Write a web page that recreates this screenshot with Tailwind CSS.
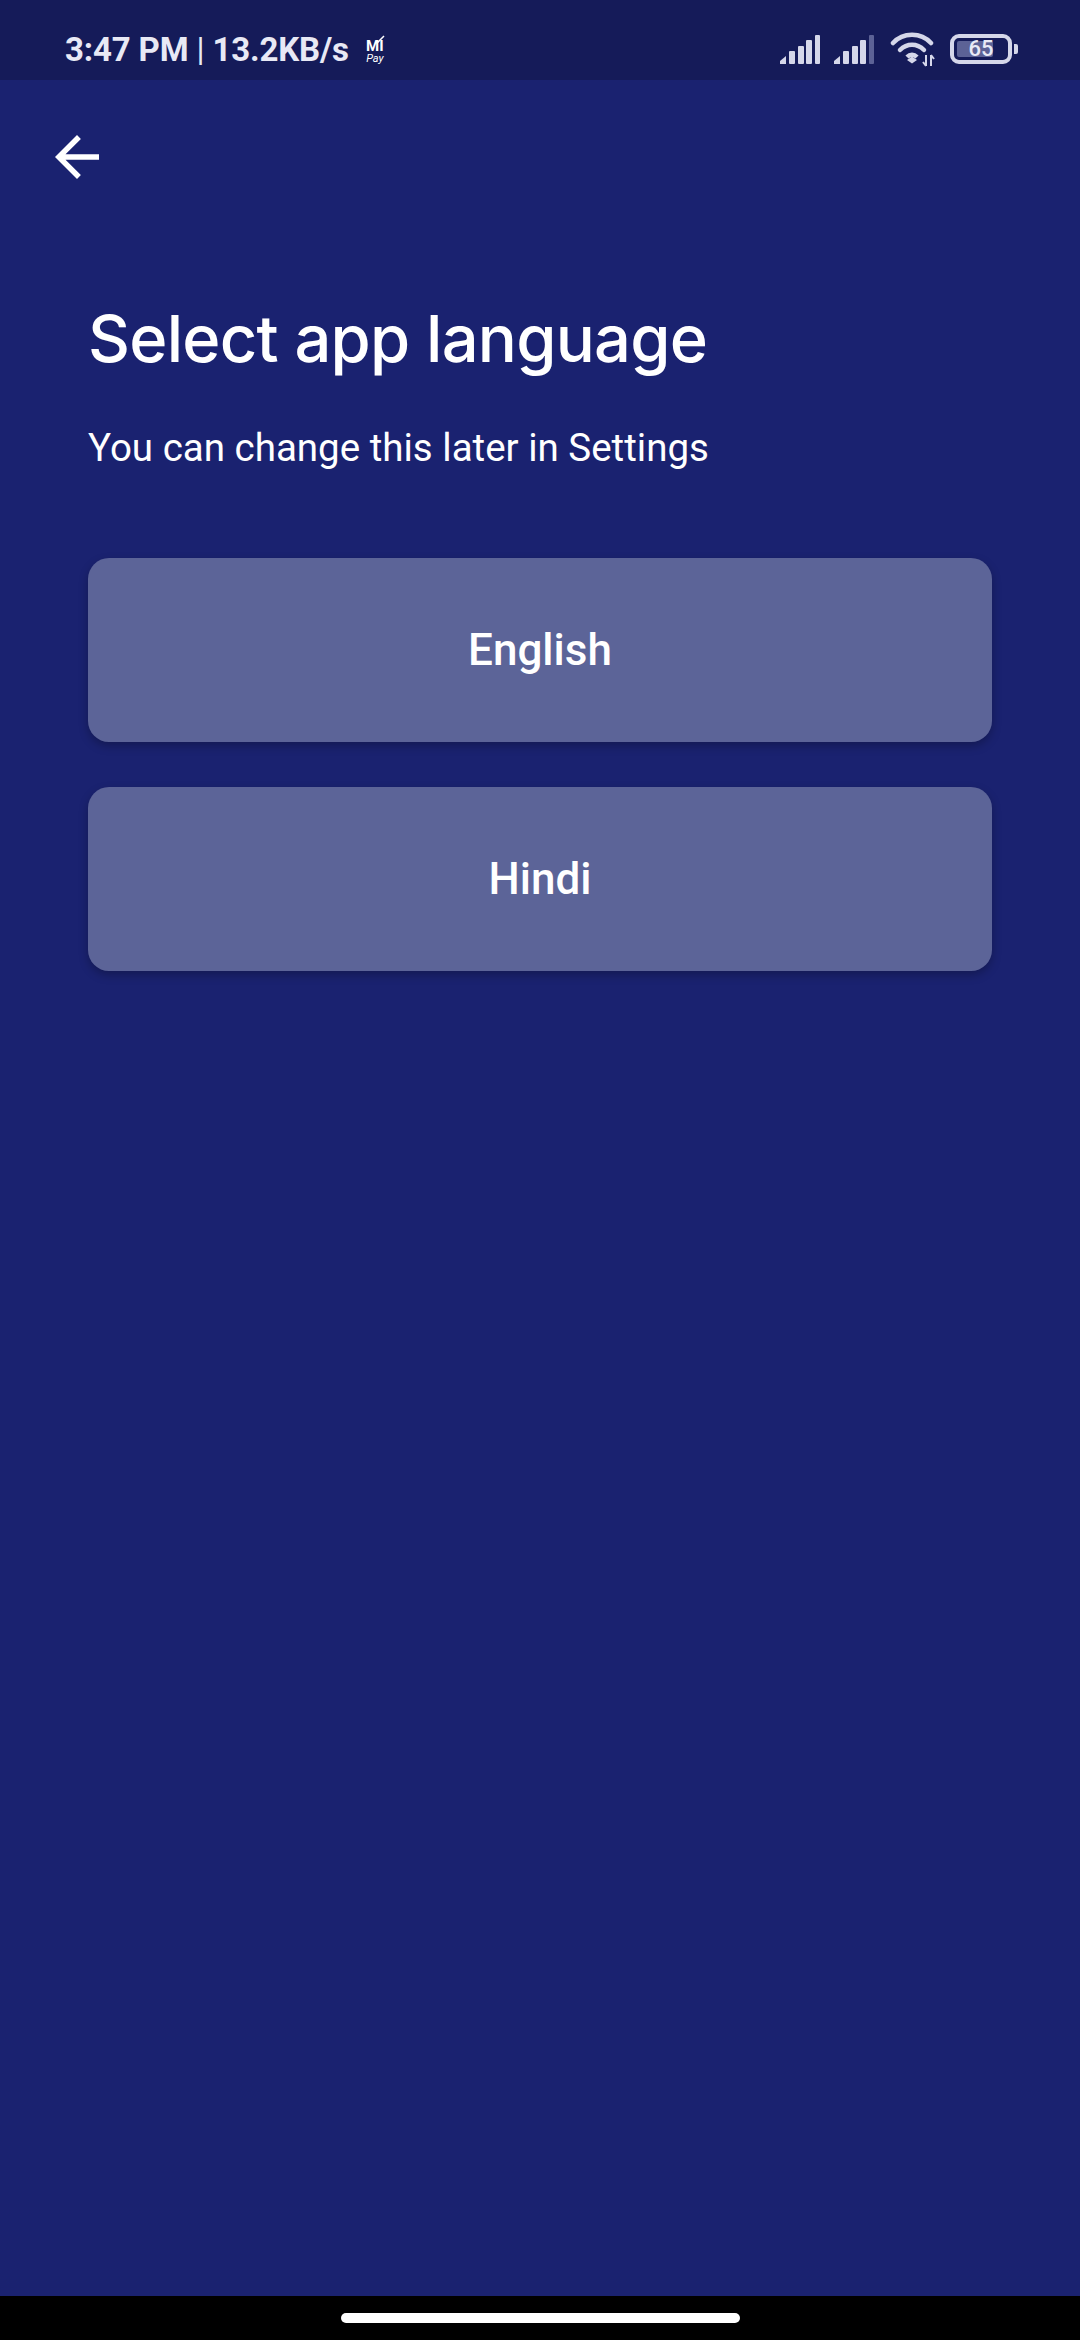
<!DOCTYPE html>
<html lang="en">
<head>
<meta charset="utf-8">
<script src="https://cdn.jsdelivr.net/npm/@tailwindcss/browser@4"></script>
<title>Select app language</title>
</head>
<body class="m-0">
<div class="w-[1080px] h-[2340px] flex flex-col bg-[#1a2270] font-['Roboto',sans-serif] text-white overflow-hidden">
  <!-- status bar -->
  <div class="h-[80px] shrink-0 bg-[#151b59] flex items-center pt-[18px] pl-[65px] pr-[62px] text-[#e8e9f5]">
    <span class="text-[33px] font-bold leading-none whitespace-nowrap tracking-[-0.15px]">3:47 PM <span class="font-normal">|</span> 13.2KB/s</span>
    <div class="ml-[16px] w-[20px] h-[28px] flex flex-col items-center relative">
      <span class="text-[15px] font-bold leading-[15px] mt-[4px] text-white">MI</span>
      <span class="text-[11px] leading-[10px] italic text-white">Pay</span>
      <svg class="absolute top-0 right-0 w-[10px] h-[8px]" viewBox="0 0 10 8"><path d="M1 6l2 1L9 1" stroke="#fff" stroke-width="1.5" fill="none"/></svg>
    </div>
    <div class="ml-auto flex items-center">
      <svg class="w-[40px] h-[29px]" viewBox="0 0 40 29" fill="#d5d7ea">
        <path d="M0 29v-3l6-5v8z"/><rect x="9" y="16" width="6" height="13" rx="1"/><rect x="18" y="11" width="6" height="18" rx="1"/><rect x="26" y="5" width="6" height="24" rx="1"/><rect x="35" y="0" width="5" height="29" rx="1"/>
      </svg>
      <svg class="ml-[14px] w-[40px] h-[29px]" viewBox="0 0 40 29" fill="#d5d7ea">
        <path d="M0 29v-3l6-5v8z"/><rect x="9" y="16" width="6" height="13" rx="1"/><rect x="18" y="11" width="6" height="18" rx="1"/><rect x="26" y="5" width="6" height="24" rx="1"/><rect x="35" y="0" width="5" height="29" rx="1" fill="#5c6296"/>
      </svg>
      <svg class="ml-[16px] w-[46px] h-[36px]" viewBox="0 0 46 36" fill="none" stroke="#d5d7ea" stroke-width="4.5" stroke-linecap="round">
        <path d="M3 12C13 1 31 1 41 12"/><path d="M10 19c7-7 17-7 24 0"/>
        <path d="M17 26c3-3 7-3 10 0" stroke-linecap="butt"/>
        <path d="M17 29l5-3.5 5 3.5-5 3.5z" fill="#d5d7ea" stroke="none"/>
        <path d="M36 35V24M33 31l3 4M41 24v11M41 24l3 4" stroke-width="2" stroke-linecap="butt"/>
      </svg>
      <div class="ml-[14px] w-[62px] h-[30px] rounded-[9px] border-[4px] border-[#d5d7ea] relative flex items-center justify-center overflow-hidden p-[3px]">
        <div class="absolute left-[3px] top-[3px] bottom-[3px] w-[36px] rounded-[2px] bg-[#5c6296]"></div>
        <span class="relative text-[22px] font-medium leading-none text-[#e8e9f5]">65</span>
      </div>
      <div class="ml-[2px] w-[4px] h-[10px] rounded-r-[2px] bg-[#d5d7ea]"></div>
    </div>
  </div>
  <!-- back -->
  <div class="h-[88px] mt-[44px] pl-[44px] shrink-0 flex items-start">
    <svg class="w-[66px] h-[66px]" viewBox="0 0 24 24" fill="#fff"><path d="M20 11H7.83l5.59-5.59L12 4l-8 8 8 8 1.41-1.41L7.83 13H20v-2z"/></svg>
  </div>
  <!-- content -->
  <div class="px-[88px] flex flex-col flex-1">
    <h1 class="mt-[89px] text-[65px] font-medium leading-[76px] font-['Inter',sans-serif] tracking-[-0.75px] whitespace-nowrap">Select app language</h1>
    <p class="mt-[46px] text-[38.5px] leading-[50px]">You can change this later in Settings</p>
    <div class="mt-[85px] flex flex-col gap-[45px]">
      <button class="h-[184px] rounded-[21px] bg-[#5c6498] shadow-[0_4px_10px_rgba(0,0,0,0.25)] text-[44px] font-medium text-white">English</button>
      <button class="h-[184px] rounded-[21px] bg-[#5c6498] shadow-[0_4px_10px_rgba(0,0,0,0.25)] text-[44px] font-medium text-white">Hindi</button>
    </div>
  </div>
  <!-- nav -->
  <div class="h-[44px] shrink-0 bg-black flex items-center justify-center">
    <div class="w-[399px] h-[10px] rounded-full bg-white"></div>
  </div>
</div>
</body>
</html>
